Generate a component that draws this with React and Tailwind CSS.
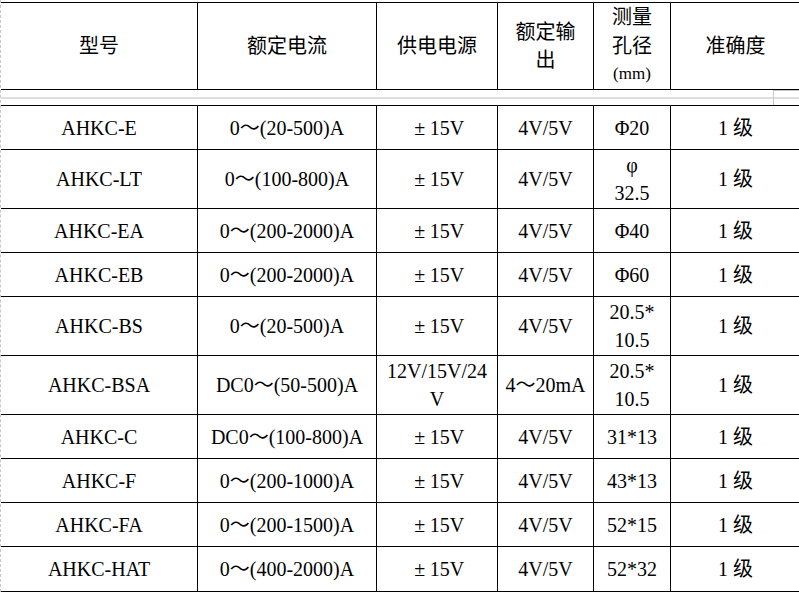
const cols = 'grid grid-cols-[197px_179px_121px_96px_77px_130px]';

const header = [
  ['型号'],
  ['额定电流'],
  ['供电电源'],
  ['额定输', '出'],
  ['测量', '孔径', '(mm)'],
  ['准确度'],
];

const pm = (
  <>
    <span className="inline-block w-[20px] text-center">±</span>15V
  </>
);

const rows = [
  { h: 'h-[44px]', c: ['AHKC-E', '0～(20-500)A', pm, '4V/5V', ['Φ20'], '1 级'] },
  { h: 'h-[59px]', c: ['AHKC-LT', '0～(100-800)A', pm, '4V/5V', ['φ', '32.5'], '1 级'] },
  { h: 'h-[44px]', c: ['AHKC-EA', '0～(200-2000)A', pm, '4V/5V', ['Φ40'], '1 级'] },
  { h: 'h-[44px]', c: ['AHKC-EB', '0～(200-2000)A', pm, '4V/5V', ['Φ60'], '1 级'] },
  { h: 'h-[59px]', c: ['AHKC-BS', '0～(20-500)A', pm, '4V/5V', ['20.5*', '10.5'], '1 级'] },
  { h: 'h-[59px]', c: ['AHKC-BSA', 'DC0～(50-500)A', ['12V/15V/24', 'V'], '4～20mA', ['20.5*', '10.5'], '1 级'] },
  { h: 'h-[44px]', c: ['AHKC-C', 'DC0～(100-800)A', pm, '4V/5V', ['31*13'], '1 级'] },
  { h: 'h-[44px]', c: ['AHKC-F', '0～(200-1000)A', pm, '4V/5V', ['43*13'], '1 级'] },
  { h: 'h-[44px]', c: ['AHKC-FA', '0～(200-1500)A', pm, '4V/5V', ['52*15'], '1 级'] },
  { h: 'h-[45px]', c: ['AHKC-HAT', '0～(400-2000)A', pm, '4V/5V', ['52*32'], '1 级'] },
];

function Cell({ children }) {
  const lines = Array.isArray(children) ? children : [children];
  return (
    <div className="flex flex-col items-center justify-center border-r border-black text-center leading-[28px]">
      {lines.map((l, i) => (
        <div key={i}>{l}</div>
      ))}
    </div>
  );
}

export default function App() {
  return (
    <div
      className="w-[799px] h-[592px] overflow-hidden bg-white text-[20px] text-black border-l border-dashed border-[#c8c8c8] pt-[2px]"
      style={{ fontFamily: '"Liberation Serif", "Noto Sans CJK SC", serif' }}
    >
      <div className="w-[801px]">
        {/* header */}
        <div className={`${cols} h-[88px] border-y border-black`}>
          {header.map((h, i) => (
            <div
              key={i}
              className="flex flex-col items-center justify-center border-r border-black text-center leading-[28.5px]"
            >
              {h.map((l, j) => (
                <div key={j} className={l === '(mm)' ? 'text-[17px]' : ''}>
                  {l}
                </div>
              ))}
            </div>
          ))}
        </div>

        {/* gap between header and body */}
        <div className="flex h-[15px]">
          <div className="flex-1 pt-[7px]">
            <div className="h-[2px] bg-[#dedede]" />
          </div>
          <div className="w-[29px] border-l border-t border-[#c8c8c8] pt-[6px]">
            <div className="h-[2px] bg-[#dedede]" />
          </div>
        </div>

        {/* body */}
        <div className="border-t border-black">
          {rows.map((r, i) => (
            <div key={i} className={`${cols} ${r.h} border-b border-black`}>
              {r.c.map((c, j) => (
                <Cell key={j}>{c}</Cell>
              ))}
            </div>
          ))}
        </div>
      </div>
    </div>
  );
}
